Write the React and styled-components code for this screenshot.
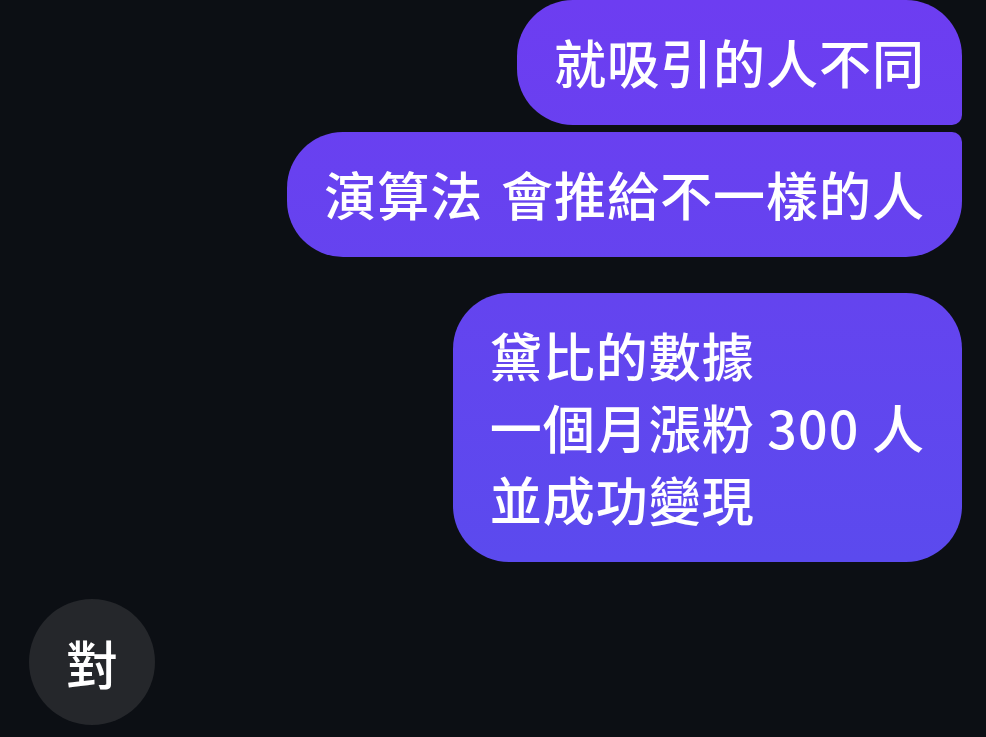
import React from "react";
import styled, { createGlobalStyle } from "styled-components";

const Global = createGlobalStyle`
  html, body {
    margin: 0;
    padding: 0;
    background: #0c0f14;
    overflow: hidden;
  }
  body {
    font-family: "Noto Sans CJK TC", "Noto Sans", sans-serif;
  }
`;

const Thread = styled.div`
  width: 986px;
  height: 737px;
  box-sizing: border-box;
  padding: 0 24px 0 29px;
  display: flex;
  flex-direction: column;
  background: #0c0f14;
`;

const Group = styled.div`
  display: flex;
  flex-direction: column;
  align-items: ${(p) => (p.$mine ? "flex-end" : "flex-start")};
  gap: 7px;
  margin-top: ${(p) => p.$top || 0}px;
`;

const Bubble = styled.div`
  box-sizing: border-box;
  padding: 26px 37px 27px;
  font-size: 52px;
  line-height: 72px;
  letter-spacing: 1px;
  word-spacing: ${(p) => p.$wordSpace || 0}px;
  font-weight: 500;
  color: #ffffff;
  white-space: pre;
  background: linear-gradient(180deg, #6d3df1 0px, #6444ef 300px, #5b4aee 560px);
  background-attachment: fixed;
  border-radius: ${(p) => p.$radius || "56px"};
`;

const Reply = styled.div`
  width: 126px;
  height: 126px;
  border-radius: 50%;
  background: #25272b;
  color: #ffffff;
  font-size: 52px;
  font-weight: 500;
  display: flex;
  align-items: center;
  justify-content: center;
`;

export default function App() {
  return (
    <>
      <Global />
      <Thread>
        <Group $mine>
          <Bubble $radius="56px 56px 10px 56px">就吸引的人不同</Bubble>
          <Bubble $radius="56px 10px 56px 56px" $wordSpace={5}>
            演算法 會推給不一樣的人
          </Bubble>
        </Group>
        <Group $mine $top={36}>
          <Bubble>{"黛比的數據\n一個月漲粉 300 人\n並成功變現"}</Bubble>
        </Group>
        <Group $top={37}>
          <Reply>對</Reply>
        </Group>
      </Thread>
    </>
  );
}
